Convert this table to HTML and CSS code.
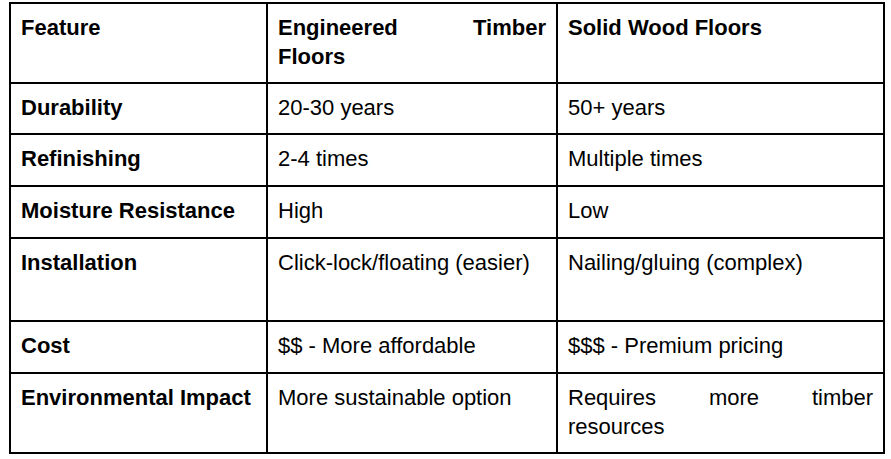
FILE: index.html
```html
<!DOCTYPE html>
<html>
<head>
<meta charset="utf-8">
<link rel="stylesheet" href="styles.css">
</head>
<body>
<table class="compare">
  <thead>
    <tr>
      <th class="c1">Feature</th>
      <th class="c2">Engineered Timber Floors</th>
      <th class="c3">Solid Wood Floors</th>
    </tr>
  </thead>
  <tbody>
    <tr>
      <td class="label">Durability</td>
      <td>20-30 years</td>
      <td>50+ years</td>
    </tr>
    <tr>
      <td class="label">Refinishing</td>
      <td>2-4 times</td>
      <td>Multiple times</td>
    </tr>
    <tr>
      <td class="label">Moisture Resistance</td>
      <td>High</td>
      <td>Low</td>
    </tr>
    <tr class="tall">
      <td class="label">Installation</td>
      <td>Click-lock/floating (easier)</td>
      <td>Nailing/gluing (complex)</td>
    </tr>
    <tr>
      <td class="label">Cost</td>
      <td>$$ - More affordable</td>
      <td>$$$ - Premium pricing</td>
    </tr>
    <tr>
      <td class="label">Environmental Impact</td>
      <td>More sustainable option</td>
      <td>Requires more timber resources</td>
    </tr>
  </tbody>
</table>
</body>
</html>
```
FILE: styles.css
```css
html, body {
  margin: 0;
  padding: 0;
  background: #ffffff;
}

body {
  padding: 2px 0 0 9px;
  font-family: "Liberation Sans", Arial, sans-serif;
  font-size: 22px;
  line-height: 28.8px;
  color: #000000;
}

.compare {
  width: 876px;
  table-layout: fixed;
  border-collapse: separate;
  border-spacing: 0;
  border-top: 2px solid #000;
  border-left: 2px solid #000;
}

.compare th,
.compare td {
  box-sizing: border-box;
  border-right: 2px solid #000;
  border-bottom: 2px solid #000;
  text-align: justify;
  vertical-align: top;
  font-weight: normal;
}

.compare th {
  padding: 10px;
  font-weight: bold;
}

.compare td {
  padding: 10px 10px 11px 10px;
}

.compare td.label {
  font-weight: bold;
}

.c1 { width: 257px; }
.c2 { width: 290px; }
.c3 { width: 327px; }

.tall td {
  height: 83px;
}
```
